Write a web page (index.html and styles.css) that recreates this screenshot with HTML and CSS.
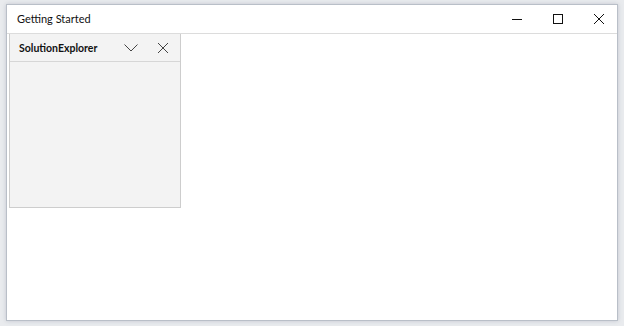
FILE: index.html
```html
<!DOCTYPE html>
<html lang="en">
<head>
  <meta charset="UTF-8">
  <title>Getting Started</title>
  <link rel="stylesheet" href="styles.css">
</head>
<body>

<div class="window">
  <div class="titlebar">
    <span class="title">Getting Started</span>
    <div class="controls">
      <span class="ctl">
        <svg width="10" height="10" viewBox="0 0 10 10"><path d="M0 5.5h10" stroke="#111" stroke-width="1"/></svg>
      </span>
      <span class="ctl">
        <svg width="10" height="10" viewBox="0 0 10 10"><rect x="0.5" y="0.5" width="9" height="9" fill="none" stroke="#111" stroke-width="1"/></svg>
      </span>
      <span class="ctl">
        <svg width="10" height="10" viewBox="0 0 10 10"><path d="M0 0L10 10M10 0L0 10" stroke="#111" stroke-width="1"/></svg>
      </span>
    </div>
  </div>

  <div class="content">
    <!-- docked tool window -->
    <div class="pane">
      <div class="pane-head">
        <span class="pane-title">SolutionExplorer</span>
        <span class="pane-btn">
          <svg width="14" height="8" viewBox="0 0 14 8"><path d="M0.5 0.5L7 7L13.5 0.5" fill="none" stroke="#444" stroke-width="1"/></svg>
        </span>
        <span class="pane-btn">
          <svg width="10" height="10" viewBox="0 0 10 10"><path d="M0 0L10 10M10 0L0 10" stroke="#444" stroke-width="1"/></svg>
        </span>
      </div>
      <div class="pane-body"></div>
    </div>
  </div>
</div>

</body>
</html>
```
FILE: styles.css
```css
* { margin: 0; padding: 0; box-sizing: border-box; }
body {
  background: #e9ebee;
  font-family: 'Lato', 'Liberation Sans', sans-serif;
  padding: 4px 6px 5px 6px;
  height: 326px;
  overflow: hidden;
}

.window {
  height: 317px;
  background: #fff;
  border: 1px solid #b9bfc8;
  box-shadow: 0 0 4px rgba(120, 130, 150, 0.35);
  display: flex;
  flex-direction: column;
}

.titlebar {
  height: 29px;
  display: flex;
  align-items: center;
  justify-content: space-between;
  border-bottom: 1px solid #dcdcdc;
}
.title {
  font-size: 11px;
  color: #111;
  margin-left: 10px;
  margin-top: -2px;
}
.controls { display: flex; height: 100%; }
.ctl {
  width: 41px;
  display: flex;
  align-items: center;
  justify-content: center;
  padding-left: 4px;
}

.content { flex: 1; padding: 0 0 0 2px; }

.pane {
  width: 172px;
  height: 174px;
  background: #f3f3f3;
  border: 1px solid #cdcdcd;
  border-top: none;
  display: flex;
  flex-direction: column;
}
.pane-head {
  height: 28px;
  display: flex;
  align-items: center;
  border-bottom: 1px solid #d6d6d6;
  padding-left: 9px;
}
.pane-title {
  font-size: 10.5px;
  font-weight: 700;
  color: #111;
  flex: 1;
}
.pane-btn {
  width: 31px;
  display: flex;
  justify-content: center;
  align-items: center;
  padding-right: 4px;
}
.pane-btn:last-child { width: 32px; padding-right: 2px; }
.pane-body { flex: 1; }
```
